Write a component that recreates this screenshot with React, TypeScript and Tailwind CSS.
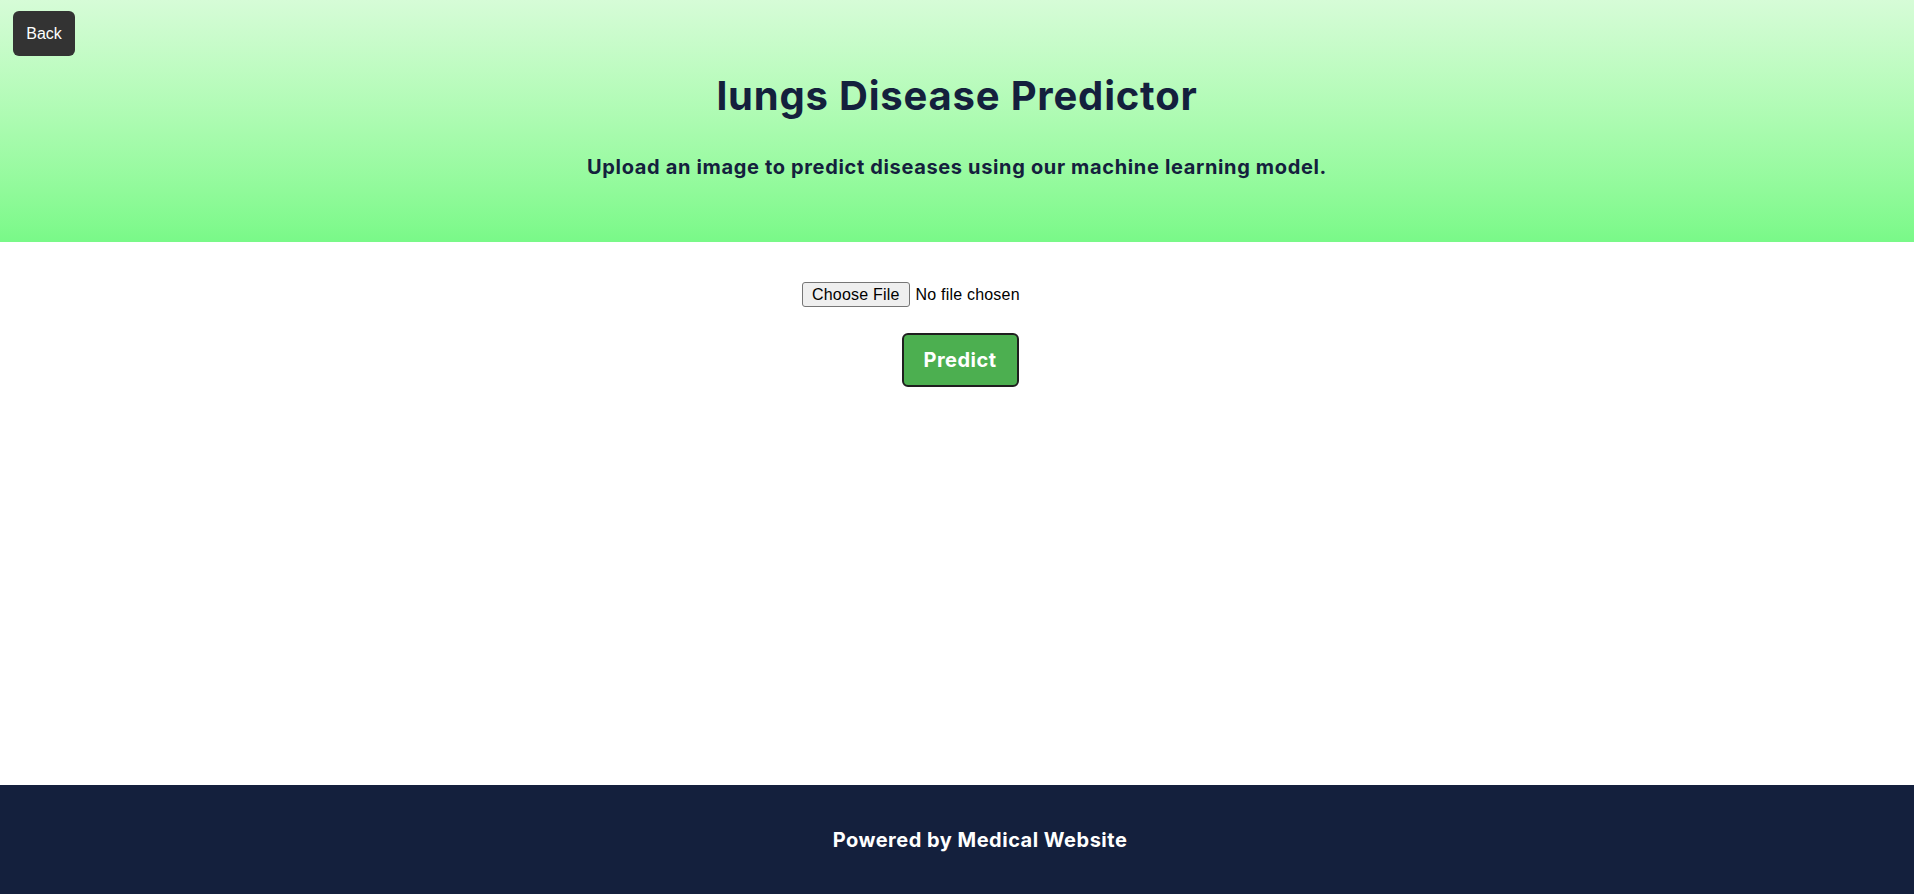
import { useState } from 'react'

export default function App() {
  const [fileName, setFileName] = useState<string | null>(null)

  return (
    <div className="min-h-screen flex flex-col bg-white font-['Inter',sans-serif]">
      {/* Header */}
      <header className="relative h-[242px] bg-gradient-to-b from-[#d6fcd7] to-[#79f988] flex flex-col items-center pt-[72px]">
        <button
          type="button"
          className="absolute top-[11px] left-[13px] w-[62px] h-[45px] rounded-md bg-[#333333] text-white text-base font-['Liberation_Sans',Arial,sans-serif]"
        >
          Back
        </button>
        <h1 className="text-[40px] leading-[48px] font-bold text-[#14203d] tracking-[0.8px]">
          lungs Disease Predictor
        </h1>
        <p className="mt-[33px] text-[20px] leading-[28px] font-bold text-[#14203d] tracking-[0.65px]">
          Upload an image to predict diseases using our machine learning model.
        </p>
      </header>

      {/* Main */}
      <main className="flex-1 flex flex-col items-center pt-[40px]">
        <input
          type="file"
          accept="image/*"
          onChange={(e) => setFileName(e.target.files?.[0]?.name ?? null)}
          className="w-[310px] text-base font-['Liberation_Sans',Arial,sans-serif] tracking-[0.2px] text-black file:h-[25px] file:px-[9px] file:mr-[6px] file:border file:border-[#767676] file:rounded-[3px] file:bg-[#efefef] file:text-black"
        />
        <button
          type="button"
          className="mt-[26px] ml-[6px] w-[117px] h-[54px] rounded-md bg-[#4caf50] border-2 border-[#1f1f1f] text-white text-[20px] font-bold tracking-[0.5px]"
        >
          Predict
        </button>
        {fileName && <p className="mt-4 text-sm text-gray-600">{fileName}</p>}
      </main>

      {/* Footer */}
      <footer className="h-[109px] bg-[#14203d] flex items-center justify-center pl-[46px]">
        <p className="text-white text-[20px] font-bold tracking-[0.5px]">Powered by Medical Website</p>
      </footer>
    </div>
  )
}
